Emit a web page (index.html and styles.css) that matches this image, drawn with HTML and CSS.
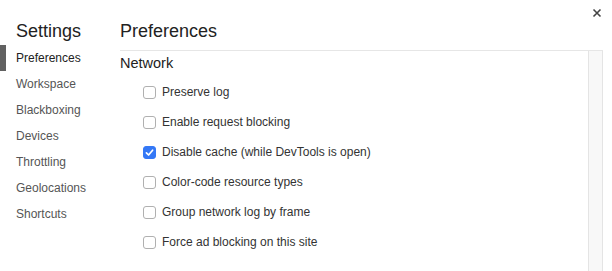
FILE: index.html
```html
<!DOCTYPE html>
<html>
<head>
<meta charset="utf-8">
<link rel="stylesheet" href="styles.css">
</head>
<body>
<div class="settings">
  <nav class="sidebar">
    <h1 class="title">Settings</h1>
    <ul class="tabs">
      <li class="tab active">Preferences</li>
      <li class="tab">Workspace</li>
      <li class="tab">Blackboxing</li>
      <li class="tab">Devices</li>
      <li class="tab">Throttling</li>
      <li class="tab">Geolocations</li>
      <li class="tab">Shortcuts</li>
    </ul>
  </nav>
  <main class="main">
    <h1 class="title">Preferences</h1>
    <div class="pane">
      <div class="content">
        <h2 class="section">Network</h2>
        <label class="option"><span class="box"></span>Preserve log</label>
        <label class="option"><span class="box"></span>Enable request blocking</label>
        <label class="option"><span class="box checked"><svg viewBox="0 0 13 13" width="13" height="13"><path d="M3.4 6.8 L5.6 9 L9.6 4.2" fill="none" stroke="#fff" stroke-width="1.7" stroke-linecap="round" stroke-linejoin="round"/></svg></span>Disable cache (while DevTools is open)</label>
        <label class="option"><span class="box"></span>Color-code resource types</label>
        <label class="option"><span class="box"></span>Group network log by frame</label>
        <label class="option"><span class="box"></span>Force ad blocking on this site</label>
      </div>
      <div class="scrollbar"></div>
    </div>
  </main>
  <button class="close" aria-label="Close"><svg viewBox="0 0 10 10" width="10" height="10"><path d="M1.5 1.5 L8.5 8.5 M8.5 1.5 L1.5 8.5" stroke="#444" stroke-width="1.6"/></svg></button>
</div>
</body>
</html>
```

FILE: styles.css
```css
html, body {
  margin: 0;
  padding: 0;
  background: #fff;
  font-family: "Liberation Sans", Arial, Helvetica, sans-serif;
  color: #333;
}
.settings {
  position: relative;
  display: flex;
  height: 271px;
  overflow: hidden;
}
.sidebar {
  width: 120px;
  flex: none;
}
.title {
  margin: 0;
  font-size: 18px;
  font-weight: normal;
  line-height: 22px;
  padding-top: 20px;
  height: 30px;
  color: #222;
}
.sidebar .title {
  padding-left: 16px;
  height: 25px;
}
.tabs {
  list-style: none;
  margin: 0;
  padding: 0;
}
.tab {
  height: 26px;
  line-height: 26px;
  font-size: 12px;
  padding-left: 16px;
  color: #555;
  position: relative;
}
.tab.active {
  color: #222;
}
.tab.active::before {
  content: "";
  position: absolute;
  left: 0;
  top: 0;
  width: 6px;
  height: 26px;
  background: #616161;
}
.main {
  flex: 1;
  display: flex;
  flex-direction: column;
  margin-right: 9px;
}
.pane {
  flex: 1;
  display: flex;
  border-top: 1px solid #e6e6e6;
}
.content {
  flex: 1;
}
.section {
  margin: 0;
  font-size: 14.5px;
  font-weight: normal;
  line-height: 22px;
  padding-top: 1px;
  height: 25px;
  color: #222;
}
.option {
  display: flex;
  align-items: center;
  height: 30px;
  padding-left: 23px;
  font-size: 12px;
  color: #333;
}
.box {
  width: 11px;
  height: 11px;
  border: 1px solid #b0b0b0;
  border-radius: 3px;
  margin-right: 6px;
  display: flex;
  align-items: center;
  justify-content: center;
  background: #fff;
}
.box.checked {
  border-color: #3478f6;
  background: #3478f6;
}
.box svg {
  display: block;
  flex: none;
}
.scrollbar {
  width: 13px;
  flex: none;
  background: #f8f8f8;
  border-left: 1px solid #e4e4e4;
  border-right: 1px solid #e4e4e4;
}
.close {
  position: absolute;
  top: 8px;
  right: 10px;
  width: 10px;
  height: 10px;
  padding: 0;
  border: 0;
  background: none;
}
.close svg {
  display: block;
}
```
